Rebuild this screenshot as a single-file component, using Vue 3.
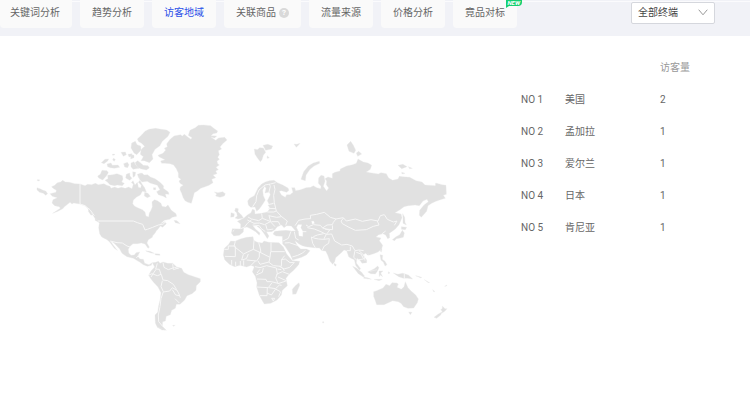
<script setup>
import { ref } from 'vue'

const tabs = [
  { label: '关键词分析' },
  { label: '趋势分析' },
  { label: '访客地域' },
  { label: '关联商品', help: true },
  { label: '流量来源' },
  { label: '价格分析' },
  { label: '竟品对标', badge: 'NEW' },
]
const active = ref('访客地域')
const terminal = ref('all')
const rows = [
  { country: '美国', visitors: 2 },
  { country: '孟加拉', visitors: 1 },
  { country: '爱尔兰', visitors: 1 },
  { country: '日本', visitors: 1 },
  { country: '肯尼亚', visitors: 1 },
]
</script>

<template>
  <div class="page">
    <header class="bar">
      <nav class="tabs">
        <button
          v-for="tab in tabs"
          :key="tab.label"
          type="button"
          class="tab"
          :class="{ active: tab.label === active }"
          @click="active = tab.label"
        >
          <span>{{ tab.label }}</span>
          <span v-if="tab.help" class="help">?</span>
          <span v-if="tab.badge" class="badge">{{ tab.badge }}</span>
        </button>
      </nav>
      <div class="picker">
        <select v-model="terminal" aria-label="终端">
          <option value="all">全部终端</option>
        </select>
        <svg class="chevron" viewBox="0 0 10 7" aria-hidden="true"><path d="M.7 .7 5 5.8 9.3 .7" /></svg>
      </div>
    </header>

    <main class="content">
      <svg class="map" viewBox="0 0 1290 660" role="img" aria-label="访客地域">
        <g class="land">
          <!-- North America -->
          <path d="M68 219 65 215 74 211 82 203 92 201 98 196 106 201 118 202 134 206 150 207 165 212 173 208 185 209 196 205 205 209 222 206 230 211 240 214 243 220 254 216 264 220 274 217 286 220 296 216 306 221 310 207 304 203 309 197 315 210 322 202 325 217 332 219 334 211 325 202 330 196 336 207 344 218 349 231 337 229 331 240 320 246 310 255 308 266 314 274 323 278 337 284 345 291 348 303 356 306 358 294 363 286 367 275 366 260 374 254 382 257 393 265 396 274 407 276 414 270 424 286 438 296 440 304 427 307 419 313 403 316 391 327 404 320 409 326 398 337 391 333 384 343 379 347 375 355 368 362 367 367 355 374 351 384 358 397 354 400 345 387 334 384 322 386 309 386 300 394 295 403 296 414 303 421 313 420 318 413 329 411 323 424 330 432 340 433 344 445 357 449 367 443 364 451 352 454 340 449 330 442 310 430 291 425 276 415 269 402 257 389 248 381 241 378 250 391 262 406 253 400 239 381 231 374 215 366 209 356 206 338 208 324 196 312 191 304 185 295 175 282 165 271 150 267 131 264 126 267 120 262 110 270 105 274 98 281 84 289 68 295 91 280 88 275 74 272 66 264 69 254 82 248 67 244 60 236 78 232 79 226Z" />
          <path d="M21 218 32 222 39 226 47 228 53 236 47 241 40 235 29 232 21 225ZM22 194l6 0 0 4-6-1ZM176 280l6 9 5 10-4 2-8-12ZM196 311l14 8-5 2-10-5Z" />
          <path d="M216 166 231 167 235 173 229 183 218 195 206 189 203 183 211 178ZM233 181 248 179 261 176 277 182 279 192 275 201 283 205 277 212 262 210 253 212 240 209 232 201 225 196 234 191ZM214 143 225 133 236 132 233 138 222 146ZM231 147 243 144 247 151 264 150 269 157 253 160 241 158 233 155ZM273 112 286 111 289 119 280 124ZM281 146 292 142 297 149 293 158 284 156ZM289 178 299 174 300 183 306 190 299 196 287 189ZM303 144 312 140 317 150 327 160 309 163 303 155ZM308 170 317 172 315 183 309 187ZM315 143 323 137 331 143 340 151 354 152 358 159 349 165 332 161 322 157ZM250 130l6 3-3 6-5-4ZM294 118l12-2 1 8-10 2ZM247 118l6-1 1 3-6 1ZM322 178l12-4 8 8-6 8-10-2Z" />
          <path d="M305 84 316 79 321 89 332 93 333 106 320 119 312 114 303 99ZM303 119l9 2 0 7-10 4Z" />
          <path d="M322 72 334 61 345 49 357 43 377 40 393 43 410 45 420 52 414 64 397 79 389 93 375 103 366 119 369 132 358 143 343 137 333 137 340 125 331 118 334 103 344 94 334 84 326 80Z" />
          <path d="M327 180 337 175 342 180 353 179 361 186 375 191 390 202 401 213 400 220 415 231 417 238 406 237 409 249 400 244 385 239 380 230 390 224 382 211 370 207 360 204 352 199 336 201 328 192ZM344 232l10 3 7 9-9 4-9-5ZM370 218l7 0 0 6-6 0ZM432 316l9 1 9 9-14-3Z" />
          <!-- Greenland, Iceland -->
          <path d="M384 121 399 115 407 105 403 100 412 95 410 87 419 74 432 63 451 59 457 63 463 58 476 68 483 73 486 68 475 61 480 46 496 38 505 31 520 30 542 32 551 40 563 48 560 54 549 56 543 62 560 63 554 69 543 67 557 76 566 69 584 67 591 75 578 86 570 96 575 102 565 107 568 119 563 127 568 133 561 139 563 146 568 150 558 157 565 164 557 168 561 176 549 180 557 188 545 193 549 203 537 211 523 216 512 220 502 228 493 233 489 248 484 265 474 262 465 257 459 247 455 235 450 224 451 216 460 211 450 205 447 198 453 193 445 187 445 174 439 161 431 150 420 146 405 145 395 145 392 138 405 134 388 126Z" />
          <path d="M553 231 564 233 578 230 586 236 583 243 570 247 557 243 560 237Z" />
          <!-- Caribbean -->
          <path d="M347 407l13 2 12 6-9-1-14-5ZM374 416l15 1 1 4-13-1Z" />
          <!-- Europe and Asia -->
          <path d="M655 270 653 258 659 250 673 242 678 232 684 219 695 207 706 201 718 197 732 196 742 203 758 210 774 219 777 226 770 232 754 227 748 229 754 240 766 247 770 239 780 239 789 232 785 218 794 218 797 227 812 224 828 218 842 217 850 212 860 218 872 221 873 214 865 205 866 189 873 181 882 183 885 199 880 214 890 228 896 219 889 209 890 198 885 191 894 186 907 190 907 176 915 172 930 168 931 162 950 153 968 149 979 145 984 132 1000 141 1014 144 1025 151 1021 163 1009 171 1020 173 1045 177 1053 173 1069 176 1076 189 1088 196 1104 192 1108 184 1118 185 1139 187 1158 197 1176 201 1185 210 1216 212 1217 204 1236 209 1248 211 1249 238 1240 241 1246 250 1231 254 1218 259 1205 265 1194 272 1190 289 1174 307 1168 301 1169 286 1182 270 1195 260 1191 253 1179 258 1168 272 1155 270 1134 272 1122 275 1110 284 1095 293 1113 297 1116 308 1107 329 1096 342 1085 350 1078 355 1079 368 1073 371 1067 360 1059 356 1046 359 1038 366 1053 369 1048 377 1058 391 1055 402 1044 411 1031 416 1016 421 1006 415 999 421 1010 435 1010 443 996 445 990 436 981 430 979 444 992 461 988 465 977 451 973 434 963 430 956 425 950 407 942 405 933 414 917 428 914 440 908 448 900 439 893 420 887 408 876 407 868 399 852 398 828 395 817 392 807 387 795 377 801 391 812 402 830 402 840 407 830 419 815 427 788 435 780 417 765 394 758 387 757 364 738 363 729 357 734 349 750 347 767 346 785 348 797 348 784 333 770 332 762 338 755 330 742 335 734 345 725 350 709 350 717 363 712 371 703 357 692 342 679 332 669 333 677 343 690 354 688 361 677 350 662 341 651 336 641 338 640 351 628 361 611 363 604 354 607 341 632 342 632 327 622 319 630 315 642 309 652 300 663 293 667 283 674 285 675 297 695 295 712 291 720 280 714 270 729 267 732 263 717 267 712 257 721 239 718 231 705 234 708 220 704 213 698 226 700 242 706 255 698 268 688 282 680 289 675 276 662 277Z" />
          <path d="M617 279 625 281 624 290 635 301 640 309 624 312 615 309 622 303 620 293 614 288ZM603 293l10 3-1 9-10 2Z" />
          <path d="M673 102 682 104 689 98 700 99 707 112 700 121 696 134 691 140 683 130 675 118ZM699 91 713 88 728 93 724 102 707 106ZM712 122l6 7-7 1ZM792 87l8 1 10-3-5 6-6 6Z" />
          <path d="M813 193 821 170 835 153 850 144 868 139 869 145 852 153 840 163 828 180 826 197ZM951 90 962 79 970 91 977 106 972 115 957 109ZM979 114 986 109 995 117 983 124ZM1104 151 1119 148 1131 155 1115 161ZM1135 155l12 5-8 1ZM1115 172l10 3-9 2Z" />
          <path d="M1118 296 1124 307 1125 322 1129 330 1119 325 1119 309ZM1114 335 1130 337 1126 344 1114 343ZM1117 346 1123 354 1120 367 1107 370 1099 371 1094 377 1087 374 1097 366 1109 359ZM1051 402l5 0-2 9-3-2ZM1050 419 1058 421 1057 433 1065 439 1071 449 1065 453 1060 441 1053 436ZM1011 415l7 3-7 2ZM913 445l6 4-2 5-5-4Z" />
          <!-- South-east Asia -->
          <path d="M968 454 979 459 994 471 1004 484 1000 486 985 476ZM1002 486 1015 489 1024 493 1001 490ZM1013 471 1021 467 1033 461 1043 453 1047 458 1042 469 1036 477 1022 476ZM1047 468 1059 468 1052 474 1058 485 1051 480 1048 485ZM1032 493l25 0-10 4ZM1090 474 1103 478 1118 475 1135 480 1148 492 1133 490 1120 490 1106 485ZM1075 470l5 4-5 2ZM1157 482l18 5-2 2ZM1183 494l16 9-4 0ZM1208 524l7 6-4 0ZM1244 514l6-4 0 3Z" />
          <!-- Oceania -->
          <path d="M1031 530 1040 527 1059 519 1068 508 1079 512 1086 503 1100 504 1105 507 1101 517 1114 523 1122 515 1126 500 1134 518 1144 529 1157 540 1165 552 1162 563 1151 579 1134 580 1121 575 1113 565 1105 560 1088 557 1075 563 1062 569 1040 569 1036 557 1031 544ZM1136 591l10 1-5 7ZM1237 573l8 8 6 0-6 7-8 6-1-7-4-2 5-5ZM1212 607 1225 597 1237 590 1232 600 1220 610Z" />
          <!-- South America -->
          <path d="M367 443 377 442 385 439 390 445 399 441 413 445 428 445 440 456 455 460 461 472 475 479 493 485 511 491 511 500 499 512 498 526 486 536 471 542 464 555 450 568 439 568 436 580 425 586 421 599 409 604 406 618 398 620 397 634 409 646 394 641 382 637 376 624 375 600 383 592 386 572 391 551 393 533 384 516 370 501 363 492 356 481 363 468 374 456ZM428 631l8 0-6 3ZM382 636l24 9-10 0Z" />
          <!-- Africa -->
          <path d="M615 379 631 372 650 367 669 365 671 376 682 382 697 384 702 378 716 382 747 383 760 396 770 417 787 437 809 439 806 449 791 466 778 477 768 490 772 512 757 526 754 540 741 555 722 565 703 567 697 557 688 541 680 516 681 503 676 484 667 470 673 455 663 451 650 456 630 451 614 455 598 448 584 434 580 420 583 400 595 389 602 378Z" />
          <path d="M807 503 809 511 798 537 788 538 787 523 796 512ZM878 620l3 0 0 4-3 0Z" />
        </g>

        <!-- Country borders -->
        <g class="borders">
          <path d="M150 207V267L164 272 180 284 193 302M203 318H310L322 323 338 328 345 345 352 343 368 337 385 330 401 327 405 318M241 378 261 383 277 384 291 393 300 396M319 429 327 419" />
          <path d="M382 445 377 462 388 463 393 478 382 482 366 476 357 480M399 443 402 457 415 464 434 457 446 461M394 478 399 495 413 497 430 508 440 524 447 537 451 548M397 497 393 515 400 530 393 551 390 575 385 600 386 620 398 634M400 531 419 528 427 518 440 526M427 524 437 540 450 542M435 551 448 564M428 446 430 464 445 459M378 463 363 486" />
          <path d="M668 275 678 260 680 242 687 225 705 210 721 207 737 203M717 231 721 214 718 207M733 263 731 241 735 223 732 210M733 263 739 288 755 305 772 318 767 331M714 280 738 281M712 291 731 291 739 288M716 302 740 307 755 305M695 296 697 310 686 317 665 312 654 306M652 315 672 325 688 324 704 329 721 320 735 335M632 341 643 337 652 325 665 314M697 310 710 315 722 320 717 302M668 330 688 332 693 340 706 350M707 329 712 345 730 342M724 320 745 320 752 333M608 350 613 345" />
          <path d="M795 332 806 316 825 312 842 311 841 301 860 298 883 292 901 307 918 312 940 308 949 318 976 312 997 319 1023 314 1044 318 1051 302 1063 299 1072 313 1090 321 1101 318 1093 331" />
          <path d="M941 309 933 318 937 326 957 337 976 346 1009 344 1030 334 1047 330 1042 318M918 312 910 322 907 329 891 330 878 339 871 331 850 329 836 335 828 330M878 339 899 346 889 358 870 349 853 342 832 338M889 358 881 373 898 371 896 385 883 393 876 407M889 358 905 357 914 378 935 390 951 388 967 393 975 407 987 405 1001 407M844 366 855 370 866 372 881 373M844 366 848 385 856 398M850 365 862 360 881 356M803 346 818 350 829 350M793 350 797 370 806 375M759 378 775 370 783 349M764 384 778 383 804 392M787 426 803 421 818 414 826 406M961 395 961 407 951 407M975 407 971 427 980 435M979 412 993 417 1001 432 986 434M987 407 1002 421 1005 437M1067 348 1055 357M885 342 908 344 907 331" />
          <path d="M583 403H595V393H616M616 379 612 394 641 417 653 411 670 403 672 376M670 403 692 413 692 405 686 382M723 382V410M723 410H764M616 394 616 425 585 424M640 418 635 435 649 431 655 417M688 411 688 426 680 438 650 435M692 413 720 427 717 441 690 448 684 438M720 427 722 410M717 442 730 452 754 454 755 433 764 422M754 434 766 432 780 443 793 442 779 457 762 462 748 454M605 435V449M617 440V453M631 438V452M641 436V452M664 450 676 438M675 455 690 458 710 452 739 459 742 476 737 489 744 505 724 500 711 500 708 493 681 492M680 516 715 518 726 503M739 478 757 470 778 478M744 486 771 498M744 506 768 498M712 519 711 542 690 542M711 534 724 540 737 522 751 530M717 518 737 521 748 510 755 511M752 530 746 545M725 550 734 550 730 558ZM681 474 690 463M742 462 754 464M678 480 697 472 700 459M758 458 763 468" />
          <path d="M1123 475V492" />
        </g>
        <g class="water">
          <path d="M804 329 815 329 812 338 818 349 818 364 807 362 806 348 800 338ZM845 319l6 0 2 6-6 2Z" />
          <path d="M1020 469 1041 464" />
        </g>
      </svg>

      <table class="ranking">
        <thead>
          <tr>
            <th class="rank" scope="col"></th>
            <th class="country" scope="col"></th>
            <th scope="col">访客量</th>
          </tr>
        </thead>
        <tbody>
          <tr v-for="(row, index) in rows" :key="row.country">
            <td>NO {{ index + 1 }}</td>
            <td>{{ row.country }}</td>
            <td>{{ row.visitors }}</td>
          </tr>
        </tbody>
      </table>
    </main>
  </div>
</template>

<style>
body {
  margin: 0;
  background: #fff;
}
</style>

<style scoped>
.page {
  font: 10px/16px Roboto, "Noto Sans CJK SC", sans-serif;
  color: #666;
}
.bar {
  display: flex;
  justify-content: space-between;
  align-items: flex-start;
  box-sizing: border-box;
  height: 36px;
  padding-right: 35px;
  background: linear-gradient(#fbfbfd, #fbfbfd) 0 1px / 100% 1px no-repeat #f1f2f7;
}
.tabs {
  display: flex;
  gap: 8px;
}
.tab {
  position: relative;
  display: flex;
  align-items: center;
  gap: 3px;
  height: 28px;
  padding: 0 12px 2px;
  border: 0;
  border-radius: 0 0 4px 4px;
  background: #fafafa;
  color: #666;
  font: inherit;
  white-space: nowrap;
  cursor: pointer;
}
.tab:first-child {
  padding-left: 10px;
}
.tab.active {
  color: #2b4fe8;
}
.help {
  width: 10px;
  height: 10px;
  border-radius: 50%;
  background: #d9d9d9;
  color: #fff;
  font-size: 8px;
  font-weight: 700;
  line-height: 10px;
  text-align: center;
}
.badge {
  position: absolute;
  top: 0;
  right: -5px;
  height: 6px;
  padding: 0 2px;
  border-radius: 0 0 4px 0;
  background: #14cf70;
  color: #fff;
  font-size: 6px;
  font-style: italic;
  font-weight: 700;
  line-height: 6px;
}
.badge::after {
  content: "";
  position: absolute;
  top: 100%;
  left: 0;
  border-top: 2px solid #14cf70;
  border-right: 3px solid transparent;
}
.picker {
  position: relative;
  width: 84px;
  margin-top: 2px;
}
.picker select {
  appearance: none;
  display: block;
  box-sizing: border-box;
  width: 100%;
  height: 22px;
  padding: 0 20px 0 6px;
  border: 1px solid #d5d7dd;
  border-radius: 2px;
  background: #fff;
  color: #444;
  font: inherit;
}
.chevron {
  position: absolute;
  top: 7px;
  right: 7px;
  width: 10px;
  height: 7px;
  fill: none;
  stroke: #999;
  pointer-events: none;
}
.content {
  display: grid;
  grid-template-columns: 1fr 194px;
  align-items: start;
  gap: 61px;
  padding: 16px 35px 24px 30px;
}
.map {
  display: block;
  width: 100%;
  margin-top: 63px;
}
.land {
  fill: #e1e1e1;
  stroke: #e9e9e9;
  stroke-width: 1;
  stroke-linejoin: round;
}
.borders {
  fill: none;
  stroke: #f7f7f7;
  stroke-width: 3;
  stroke-linejoin: round;
}
.water {
  fill: #fff;
  stroke: #fff;
  stroke-width: 1;
}
.ranking {
  width: 100%;
  border-collapse: collapse;
  table-layout: fixed;
  text-align: left;
}
.ranking th,
.ranking td {
  height: 32px;
  padding: 0;
  font-weight: 400;
}
.ranking th {
  color: #999;
}
.rank {
  width: 44px;
}
.country {
  width: 95px;
}
</style>
